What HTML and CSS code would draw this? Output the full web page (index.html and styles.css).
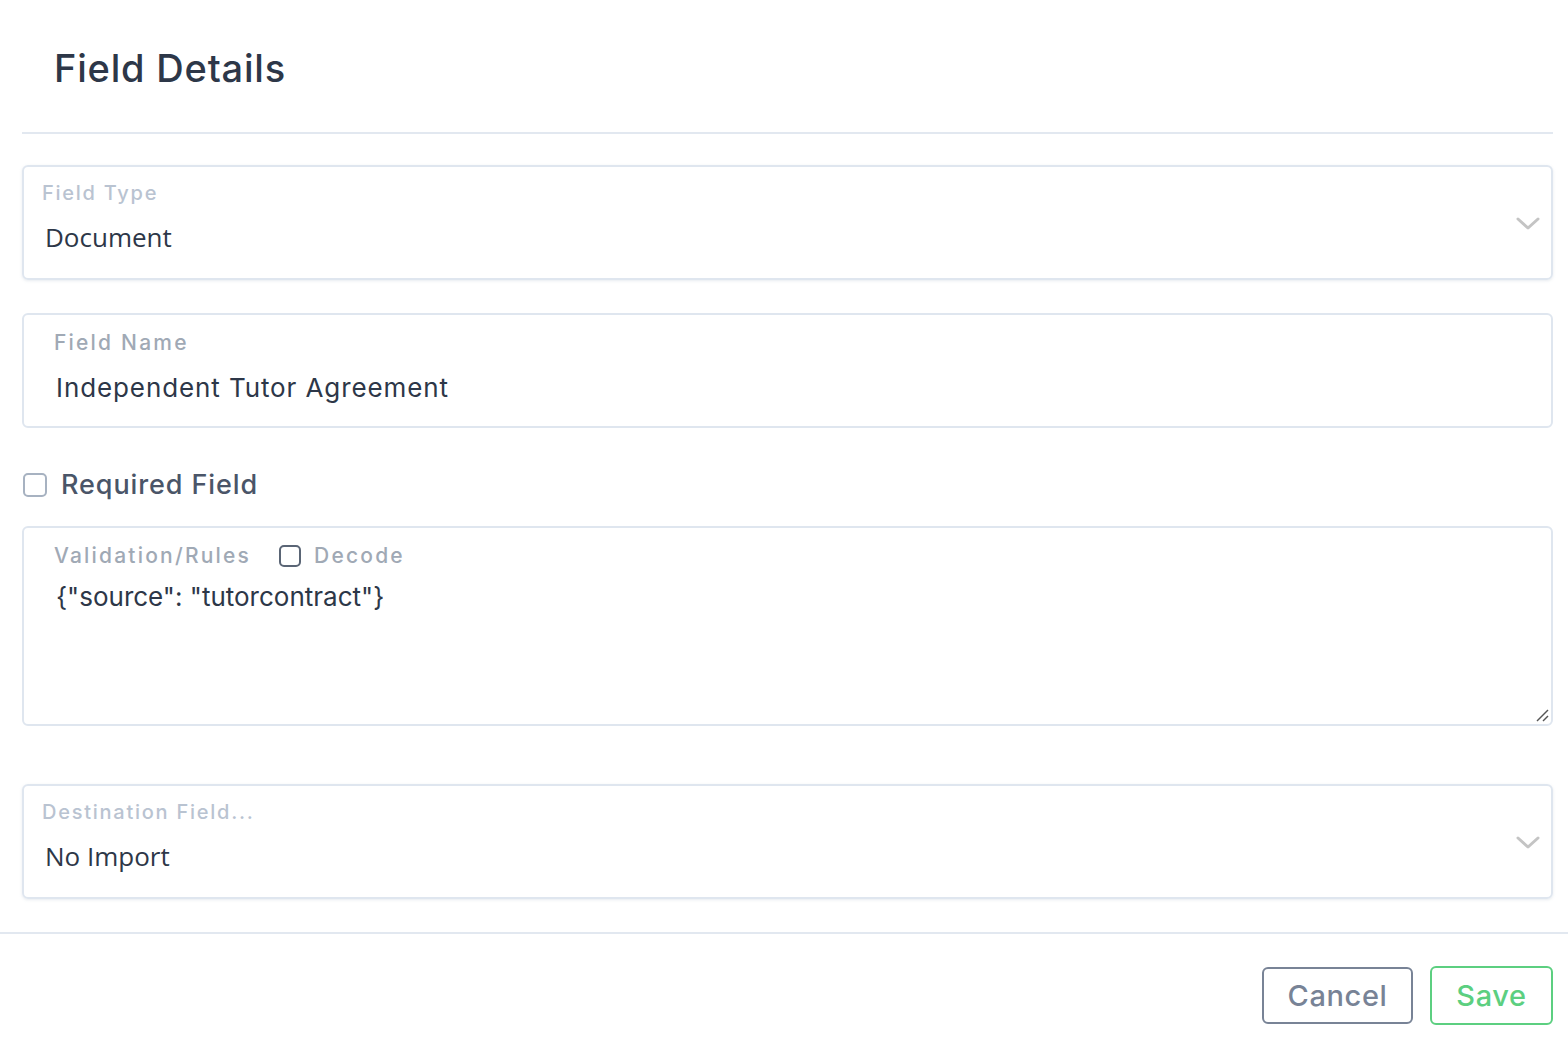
FILE: index.html
```html
<!DOCTYPE html>
<html lang="en">
<head>
    <meta charset="UTF-8">
    <meta name="viewport" content="width=device-width, initial-scale=1.0">
    <title>Field Details</title>
    <link rel="stylesheet" href="styles.css">
</head>
<body>
    <div class="modal">
        <!-- Cabecera -->
        <div class="modal-header">
            <h1 class="modal-title">Field Details</h1>
        </div>

        <div class="modal-body">
            <!-- Tipo de campo -->
            <div class="select-box">
                <div class="select-text">
                    <span class="select-label">Field Type</span>
                    <span class="select-value">Document</span>
                </div>
                <svg class="chevron" width="24" height="14" viewBox="0 0 24 14">
                    <polyline points="2,2 12,11 22,2" fill="none" stroke="#c4c4c4" stroke-width="3" stroke-linecap="round" stroke-linejoin="round"/>
                </svg>
            </div>

            <!-- Nombre -->
            <div class="input-box">
                <span class="input-label">Field Name</span>
                <span class="input-value">Independent Tutor Agreement</span>
            </div>

            <label class="check-row">
                <span class="checkbox"></span>
                <span class="check-label">Required Field</span>
            </label>

            <!-- Reglas -->
            <div class="input-box textarea-box">
                <div class="textarea-head">
                    <span class="input-label">Validation/Rules</span>
                    <span class="checkbox small"></span>
                    <span class="input-label">Decode</span>
                </div>
                <span class="input-value code">{"source": "tutorcontract"}</span>
                <svg class="grip" width="16" height="16" viewBox="0 0 16 16">
                    <line x1="3" y1="14" x2="14" y2="3" stroke="#555" stroke-width="1.4"/>
                    <line x1="9" y1="14" x2="14" y2="9" stroke="#555" stroke-width="1.4"/>
                </svg>
            </div>

            <!-- Destino -->
            <div class="select-box dest">
                <div class="select-text">
                    <span class="select-label">Destination Field...</span>
                    <span class="select-value">No Import</span>
                </div>
                <svg class="chevron" width="24" height="14" viewBox="0 0 24 14">
                    <polyline points="2,2 12,11 22,2" fill="none" stroke="#c4c4c4" stroke-width="3" stroke-linecap="round" stroke-linejoin="round"/>
                </svg>
            </div>
        </div>

        <!-- Botones -->
        <div class="modal-footer">
            <button class="btn btn-cancel">Cancel</button>
            <button class="btn btn-save">Save</button>
        </div>
    </div>
</body>
</html>
```

FILE: styles.css
```css
body {
    margin: 0;
    background: #fff;
    font-family: "Inter", "Open Sans", sans-serif;
    color: #2d3748;
}
.modal {
    width: 1568px;
}
.modal-header {
    margin: 0 15px 0 22px;
    padding: 46px 32px 42px;
    border-bottom: 2px solid #e2e8f0;
}
.modal-title {
    margin: 0;
    font-size: 38px;
    line-height: 44px;
    font-weight: 500;
    color: #2d3748;
    letter-spacing: 0.8px;
}
.modal-body {
    padding: 31px 15px 33px 22px;
    display: flex;
    flex-direction: column;
}
.select-box {
    height: 115px;
    box-sizing: border-box;
    border: 2px solid #dfe6ef;
    border-radius: 6px;
    box-shadow: 0 1px 3px rgba(160, 174, 192, 0.25);
    display: flex;
    align-items: center;
    justify-content: space-between;
    padding: 0 11px 0 18px;
}
.select-text {
    display: flex;
    flex-direction: column;
    padding-bottom: 12px;
}
.select-label {
    font-size: 20px;
    line-height: 24px;
    font-weight: 500;
    color: #b9c3d1;
    letter-spacing: 1.75px;
}
.select-value {
    font-family: "Open Sans", sans-serif;
    font-size: 26px;
    line-height: 32px;
    margin-top: 16px;
    margin-left: 3px;
    color: #2d3748;
}
.chevron {
    margin-top: 3px;
}
.input-box {
    margin-top: 33px;
    height: 115px;
    box-sizing: border-box;
    border: 2px solid #dfe6ef;
    border-radius: 6px;
    padding: 16px 30px 0;
    display: flex;
    flex-direction: column;
}
.input-label {
    font-size: 21px;
    line-height: 24px;
    font-weight: 500;
    color: #a0a9b5;
    letter-spacing: 2.2px;
}
.input-value {
    margin-top: 17px;
    margin-left: 2px;
    font-size: 26px;
    line-height: 32px;
    color: #2d3748;
    letter-spacing: 0.9px;
}
.check-row {
    display: flex;
    align-items: center;
    gap: 14px;
    margin-top: 43px;
    margin-left: 1px;
    height: 28px;
}
.checkbox {
    width: 24px;
    height: 24px;
    box-sizing: border-box;
    border: 2px solid #a7b2c1;
    border-radius: 5px;
}
.check-label {
    font-size: 27px;
    line-height: 28px;
    font-weight: 500;
    color: #4a5568;
    letter-spacing: 0.9px;
}
.textarea-box {
    margin-top: 27px;
    height: 200px;
    position: relative;
}
.textarea-head {
    display: flex;
    align-items: center;
}
.checkbox.small {
    width: 22px;
    height: 22px;
    border-color: #5a6575;
    margin: 0 13px 0 28px;
}
.code {
    margin-top: 13px;
    font-size: 26px;
    letter-spacing: 0;
}
.grip {
    position: absolute;
    right: 1px;
    bottom: 1px;
}
.dest {
    margin-top: 58px;
}
.modal-footer {
    border-top: 2px solid #e2e8f0;
    display: flex;
    justify-content: flex-end;
    align-items: center;
    gap: 17px;
    padding: 32px 15px 0 0;
}
.btn {
    font-family: "Inter", "Open Sans", sans-serif;
    font-size: 29px;
    font-weight: 500;
    background: #fff;
    border-radius: 6px;
    box-sizing: border-box;
    letter-spacing: 0.6px;
    cursor: pointer;
}
.btn-cancel {
    width: 151px;
    height: 57px;
    border: 2px solid #788396;
    color: #788396;
}
.btn-save {
    width: 123px;
    height: 59px;
    border: 2px solid #5ccf80;
    color: #5ccf80;
}
```
